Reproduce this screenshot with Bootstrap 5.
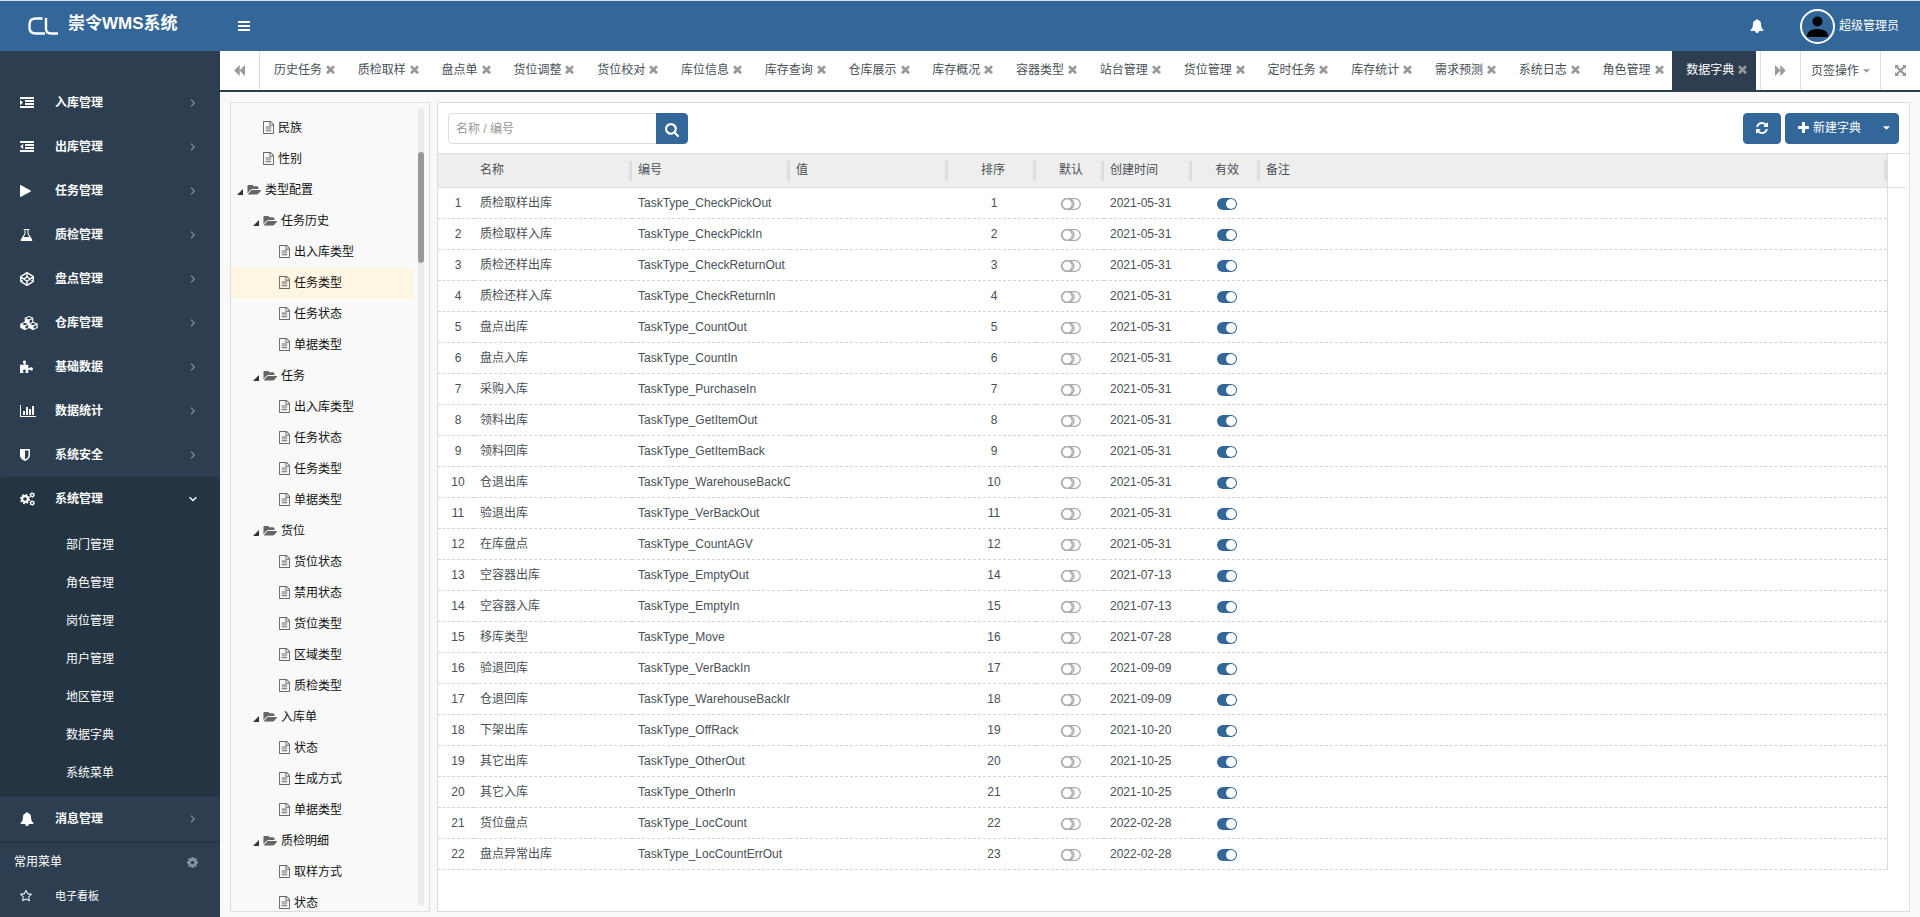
<!DOCTYPE html>
<html lang="zh-CN">
<head>
<meta charset="utf-8">
<meta name="viewport" content="width=device-width, initial-scale=1">
<title>崇令WMS系统</title>
<link href="https://cdn.jsdelivr.net/npm/bootstrap@5.3.0/dist/css/bootstrap.min.css" rel="stylesheet">
<style>
:root{--brand:#336699;--side:#2d3e50;--side-dark:#253442;--line:#ddd}
body{font-family:"Liberation Sans","Noto Sans CJK SC",sans-serif;font-size:12px;line-height:20px;color:#495057;background:#f9f9f9}
a{text-decoration:none;color:inherit}
svg{display:block;fill:currentColor;flex:none}
.topbar{height:51px;background:var(--brand);border-top:1px solid #cfe6f7;color:#fff}
.brandbox{width:220px;padding-left:28px}
.brandlogo{fill:none;stroke:#fff;stroke-width:2.4}
.brandname{font-size:17px;font-weight:700;margin-left:10px;line-height:24px}
.menubtn{margin-left:18px}
.userarea{gap:36px;padding-right:21px}
.plainbtn{background:none;border:0;padding:0;color:inherit}
.avatar{width:35px;height:35px;border:2px solid #fff;border-radius:50%}
.sidebar{width:220px;background:var(--side);color:#fff;padding-top:30px;overflow:hidden}
.sideitem{height:44px;padding:0 23px 0 20px;font-weight:700}
.sideitem .ico{width:35px}
.sideitem .arrow{color:#8a95a0}
.sideitem.open{background:var(--side-dark);border-radius:4px 4px 0 0}
.sideitem.open .arrow{color:#fff}
.submenu{background:var(--side-dark);padding:5px 0}
.submenu a{display:block;height:38px;line-height:38px;padding-left:66px}
.favhead{height:40px;border-top:2px solid var(--side-dark);padding:0 22px 0 14px}
.favhead .plainbtn{color:#8a95a0}
.favitem{height:30px;padding-left:20px;font-size:11px}
.favitem .ico{width:35px}
.tabbar{height:41px;background:#fff;border-bottom:2px solid var(--side);color:#495057}
.tabbtn{width:40px;color:#999;border-left:1px solid var(--line)}
.tabbtn.first{border-left:0;border-right:1px solid var(--line)}
.tabops{width:80px;color:#495057}
.tabops svg{color:#999}
.tabs{padding-right:4px}
.tabitem{width:84px;padding-left:14px;white-space:nowrap;min-width:0;padding-bottom:2px}
.tabitem.short{width:72px}
.tabitem.active{background:var(--side);color:#fff}
.tabitem svg{color:#999;margin-left:4px}
.workarea{padding:10px 10px 5px;gap:7px}
.treebox{width:200px;border:1px solid var(--line);padding-top:10px}
.treebox ul{width:182px}
.treebox a{height:31px;color:#111;padding-bottom:2px}
.treebox a.picked{background:#fff5e3}
.treebox svg{color:#666}
.treebox .tri{color:#333}
.lv1{padding-left:6px}.lv2{padding-left:22px}
.leaf2{padding-left:32px}.leaf3{padding-left:48px}
.track{right:5px;top:5px;bottom:5px;width:6px;border-radius:3px;background:#ebebeb;padding-top:44px}
.thumb{height:111px;border-radius:3px;background:#999}
.gridbox{border:1px solid var(--line);background:#fff}
.toolbar{padding:10px 10px 9px;border-bottom:1px solid var(--line)}
.searchbox{width:240px}
.searchbox .form-control{font-size:12px;height:31px;padding:0 7px;border-color:var(--line);border-radius:4px 0 0 4px;color:#495057}
.searchbox .form-control::placeholder{color:#999}
.btn-brand{--bs-btn-color:#fff;--bs-btn-bg:var(--brand);--bs-btn-border-color:var(--brand);--bs-btn-hover-bg:#2b5782;--bs-btn-hover-color:#fff;font-size:12px;height:31px;padding:0 8px 2px;line-height:20px;border-radius:4px}
.refresh{width:38px}
.create{width:90px}
.more{width:25px}
.datagrid{table-layout:fixed;width:100%;border-collapse:separate;border-spacing:0;border-right:1px solid var(--line)}
.datagrid th{position:relative;height:34px;background:#eee;font-weight:400;border-bottom:1px solid var(--line);padding:0 6px 1px}
.datagrid th.grip::after{content:"";position:absolute;right:0;top:7px;width:3px;height:20px;background:var(--line)}
.datagrid td{height:31px;padding:0 0 1px 6px;border-bottom:1px dashed #d4d4d4;white-space:nowrap;overflow:hidden}
.datagrid .mid{text-align:center;padding-left:2px;padding-right:0}
.datagrid td.rownum,.datagrid td.sortno{padding-left:4px}
.gridside{width:19px;height:34px;border-bottom:1px solid var(--line);margin-right:2px}
.toggle{appearance:none;display:block;width:20px;height:12px;margin:2px auto 0;background:url("data:image/svg+xml,%3Csvg xmlns='http://www.w3.org/2000/svg' viewBox='0 0 20 12' fill='none' stroke='%23aaa' stroke-width='1.3'%3E%3Crect x='.7' y='.7' width='18.6' height='10.6' rx='5.3'/%3E%3Ccircle cx='6' cy='6' r='5.3'/%3E%3Cpath d='M9 .9Q13 3 13 6T9 11.1'/%3E%3C/svg%3E") center/100% 100%}
.toggle:checked{background-image:url("data:image/svg+xml,%3Csvg xmlns='http://www.w3.org/2000/svg' viewBox='0 0 20 12'%3E%3Crect width='20' height='12' rx='6' fill='%23336699'/%3E%3Ccircle cx='14' cy='6' r='5' fill='%23fff'/%3E%3C/svg%3E")}
</style>
</head>
<body>
<svg width="0" height="0" class="position-absolute" aria-hidden="true"><defs>
<symbol id="i-bell" viewBox="0 0 1792 1792"><path d="M912 1696q0-16-16-16-59 0-101.500-42.500t-42.500-101.500q0-16-16-16t-16 16q0 73 51.500 124.500t124.500 51.500q16 0 16-16zm816-288q0 52-38 90t-90 38h-448q0 106-75 181t-181 75-181-75-75-181h-448q-52 0-90-38t-38-90q50-42 91-88t85-119.500 74.500-158.500 50-206 19.500-260q0-152 117-282.500t307-158.500q-8-19-8-39 0-40 28-68t68-28 68 28 28 68q0 20-8 39 190 28 307 158.500t117 282.500q0 139 19.500 260t50 206 74.500 158.500 85 119.500 91 88z"/></symbol>
<symbol id="i-times" viewBox="302 302 1188 1252"><path d="M1490 1322q0 40-28 68l-136 136q-28 28-68 28t-68-28l-294-294-294 294q-28 28-68 28t-68-28l-136-136q-28-28-28-68t28-68l294-294-294-294q-28-28-28-68t28-68l136-136q28-28 68-28t68 28l294 294 294-294q28-28 68-28t68 28l136 136q28 28 28 68t-28 68l-294 294 294 294q28 28 28 68z"/></symbol>
<symbol id="i-folder" viewBox="0 256 1943 1280"><path d="M1943 952q0 31-31 66l-336 396q-43 51-120.500 86.500t-143.500 35.500h-1088q-34 0-60.500-13t-26.500-43q0-31 31-66l336-396q43-51 120.500-86.500t143.500-35.500h1088q34 0 60.500 13t26.500 43zm-343-344v160h-832q-94 0-197 47.500t-164 119.500l-337 396-5 6q0-4-.5-12.500t-.5-12.500v-960q0-92 66-158t158-66h320q92 0 158 66t66 158v32h544q92 0 158 66t66 158z"/></symbol>
<symbol id="i-doc" viewBox="128 0 1536 1792"><path d="M1596 380q28 28 48 76t20 88v1152q0 40-28 68t-68 28h-1344q-40 0-68-28t-28-68v-1600q0-40 28-68t68-28h896q40 0 88 20t76 48zm-444-244v376h376q-10-29-22-41l-313-313q-12-12-41-22zm384 1528v-1024h-416q-40 0-68-28t-28-68v-416h-768v1536h1280zm-1024-864q0-14 9-23t23-9h704q14 0 23 9t9 23v64q0 14-9 23t-23 9h-704q-14 0-23-9t-9-23v-64zm736 224q14 0 23 9t9 23v64q0 14-9 23t-23 9h-704q-14 0-23-9t-9-23v-64q0-14 9-23t23-9h704zm0 256q14 0 23 9t9 23v64q0 14-9 23t-23 9h-704q-14 0-23-9t-9-23v-64q0-14 9-23t23-9h704z"/></symbol>
<symbol id="i-cog" viewBox="128 128 1536 1536"><path d="M1152 896q0-106-75-181t-181-75-181 75-75 181 75 181 181 75 181-75 75-181zm512-109v222q0 12-8 23t-20 13l-185 28q-19 54-39 91 35 50 107 138 10 12 10 25t-9 23q-27 37-99 108t-94 71q-12 0-26-9l-138-108q-44 23-91 38-16 136-29 186-7 28-36 28h-222q-14 0-24.500-8.500t-11.500-21.500l-28-184q-49-16-90-37l-141 107q-10 9-25 9-14 0-25-11-126-114-165-168-7-10-7-23 0-12 8-23 15-21 51-66.500t54-70.500q-27-50-41-99l-183-27q-13-2-21-12.500t-8-23.500v-222q0-12 8-23t19-13l186-28q14-46 39-92-40-57-107-138-10-12-10-24 0-10 9-23 26-36 98.500-107.500t94.500-71.500q13 0 26 10l138 107q44-23 91-38 16-136 29-186 7-28 36-28h222q14 0 24.500 8.500t11.500 21.500l28 184q49 16 90 37l142-107q9-9 24-9 13 0 25 10 129 119 165 170 7 8 7 22 0 12-8 23-15 21-51 66.500t-54 70.500q26 50 41 98l183 28q13 2 21 12.500t8 23.500z"/></symbol>
<symbol id="i-search" viewBox="64 128 1664 1664"><path d="M1216 832q0-185-131.500-316.500t-316.500-131.500-316.500 131.500-131.500 316.500 131.500 316.500 316.500 131.500 316.500-131.500 131.500-316.500zm512 832q0 52-38 90t-90 38q-54 0-90-38l-343-342q-179 124-399 124-143 0-273.500-55.500t-225-150-150-225-55.500-273.500 55.500-273.500 150-225 225-150 273.500-55.500 273.500 55.500 225 150 150 225 55.500 273.500q0 220-124 399l343 343q37 37 37 90z"/></symbol>
<symbol id="i-refresh" viewBox="128 128 1536 1536"><path d="M1639 1056q0 5-1 7-64 268-268 434.500t-478 166.500q-146 0-282.500-55t-243.500-157l-129 129q-19 19-45 19t-45-19-19-45v-448q0-26 19-45t45-19h448q26 0 45 19t19 45-19 45l-137 137q71 66 161 102t187 36q134 0 250-65t186-179q11-17 53-117 8-23 30-23h192q13 0 22.500 9.500t9.500 22.500zm25-800v448q0 26-19 45t-45 19h-448q-26 0-45-19t-19-45 19-45l138-138q-148-137-349-137-134 0-250 65t-186 179q-11 17-53 117-8 23-30 23h-199q-13 0-22.500-9.500t-9.500-22.500v-7q65-268 270-434.500t480-166.500q146 0 284 55.500t245 156.500l130-129q19-19 45-19t45 19 19 45z"/></symbol>
<symbol id="i-plus" viewBox="192 128 1408 1408"><path d="M1600 736v192q0 40-28 68t-68 28h-416v416q0 40-28 68t-68 28h-192q-40 0-68-28t-28-68v-416h-416q-40 0-68-28t-28-68v-192q0-40 28-68t68-28h416v-416q0-40 28-68t68-28h192q40 0 68 28t28 68v416h416q40 0 68 28t28 68z"/></symbol>
<symbol id="i-back" viewBox="128 128 1600 1536"><path d="M1683 141q19-19 32-13t13 32v1472q0 26-13 32t-32-13l-710-710q-8-9-13-19v710q0 26-13 32t-32-13l-710-710q-19-19-19-45t19-45l710-710q19-19 32-13t13 32v710q5-11 13-19z"/></symbol>
<symbol id="i-forward" viewBox="128 128 1600 1536"><path transform="translate(1856 0) scale(-1 1)" d="M1683 141q19-19 32-13t13 32v1472q0 26-13 32t-32-13l-710-710q-8-9-13-19v710q0 26-13 32t-32-13l-710-710q-19-19-19-45t19-45l710-710q19-19 32-13t13 32v710q5-11 13-19z"/></symbol>
<symbol id="i-star" viewBox="64 64 1664 1664"><path d="M1201 1004l306-297-422-62-189-382-189 382-422 62 306 297-73 421 378-199 377 199zm527-357q0 22-26 48l-363 354 86 500q1 7 1 20 0 50-41 50-19 0-40-12l-449-236-449 236q-22 12-40 12-21 0-31.500-14.500t-10.500-35.500q0-6 2-20l86-500-364-354q-25-27-25-48 0-37 56-46l502-73 225-455q19-41 49-41t49 41l225 455 502 73q56 9 56 46z"/></symbol>
<symbol id="i-shield" viewBox="256 0 1280 1792"><path d="M1344 960v-640h-448v1137q119-63 213-137 235-184 235-360zm192-768v768q0 86-33.500 170.500t-83 150-118 127.500-126.500 103-121 77.500-89.500 49.500-42.500 20q-12 6-26 6t-26-6q-16-7-42.500-20t-89.500-49.500-121-77.500-126.500-103-118-127.500-83-150-33.500-170.500v-768q0-26 19-45t45-19h1152q26 0 45 19t19 45z"/></symbol>
<symbol id="i-chart" viewBox="0 0 2048 1792"><path d="M640 896v512h-256v-512h256zm384-512v1024h-256v-1024h256zm1024 1152v128h-2048v-1536h128v1408h1920zm-640-896v768h-256v-768h256zm384-384v1152h-256v-1152h256z"/></symbol>
<symbol id="i-indent" viewBox="0 0 14 14"><path d="M0 1h14v2H0zM5 4h9v2H5zM5 7h9v2H5zM0 10h14v2H0zM0 3.800L3 6.500 0 9.200z"/></symbol>
<symbol id="i-outdent" viewBox="0 0 14 14"><path d="M0 1h14v2H0zM5 4h9v2H5zM5 7h9v2H5zM0 10h14v2H0zM3.200 3.800L.2 6.500l3 2.700z"/></symbol>
<symbol id="i-play" viewBox="0 0 11 14"><path d="M0 1.400q0-.7.6-.4l10.100 5.600q.5.400 0 .8L.6 13q-.6.300-.6-.4z"/></symbol>
<symbol id="i-flask" viewBox="0 0 13 14"><path fill-rule="evenodd" d="M4 1h5q.5 0 .5.500T9 2h-.5v3.500l3.700 6q.8 1.500-1 1.500H1.800q-1.800 0-1-1.500l3.700-6V2H4q-.5 0-.5-.5T4 1zm1.500 1v3.800L3.600 9h5.800L7.500 5.800V2z"/></symbol>
<symbol id="i-codepen" viewBox="0 0 14 14"><path fill="none" stroke="currentColor" stroke-width="1.400" stroke-linejoin="round" d="M7 .7l6.300 4v4.600L7 13.300.7 9.300V4.700zM7 1v3.600M7 9.400V13M.7 4.700L7 9.200l6.300-4.500M.7 9.300L7 4.800l6.300 4.500"/></symbol>
<symbol id="i-cubes" viewBox="0 0 18 14"><path fill-rule="evenodd" d="M9 0l3.800 1.600q.5.200.5.700v3.500l4 1.700q.5.200.5.700v3.100q0 .5-.5.700L13.500 14h-.8L9 12.100 5.300 14h-.8L.7 12q-.5-.2-.5-.7V8.200q0-.5.500-.7l4-1.700V2.300q0-.5.500-.7zM9 1.100L6.100 2.300 9 3.500l2.900-1.200zM9.500 4.400v2.900l2.700-1.200V3.300zM4.900 6.700L2 8l2.900 1.200L7.800 8zM13.100 6.700L10.200 8l2.900 1.200L16 8zM5.400 10.200v2.600L8.300 11.400V9zM13.600 10.200v2.600l3-1.500V9z"/></symbol>
<symbol id="i-puzzle" viewBox="0 0 13 14"><path d="M0 4.700h3.600q.5-.3.200-.9Q2.800 2.800 2.900 1.800 3.200.4 4.500.4T6.100 1.700q.1 1-.6 1.900-.4.800.2 1.100H8.300v3.200q.4.700 1 .2 1-.9 2-.8 1.700.1 1.700 1.600t-1.800 1.600q-1 0-1.700-.7-.8-.5-1.200.3V13H5.500q-.5-.3-.1-1 .6-.7.4-1.600-.3-1-1.400-1T3 10.400q-.2.900.4 1.600.4.700-.2 1H0z"/></symbol>
<symbol id="i-cogs" viewBox="0 0 15 14"><circle cx="5" cy="7" r="2.900" fill="none" stroke="currentColor" stroke-width="2.200"/><circle cx="5" cy="7" r="4.500" fill="none" stroke="currentColor" stroke-width="1.300" stroke-dasharray="1.800 1.734"/><circle cx="12.200" cy="3" r="1.600" fill="none" stroke="currentColor" stroke-width="1.400"/><circle cx="12.200" cy="3" r="2.500" fill="none" stroke="currentColor" stroke-width=".7" stroke-dasharray="1.300 1.318"/><circle cx="12.200" cy="11" r="1.600" fill="none" stroke="currentColor" stroke-width="1.400"/><circle cx="12.200" cy="11" r="2.500" fill="none" stroke="currentColor" stroke-width=".7" stroke-dasharray="1.300 1.318"/></symbol>
<symbol id="i-expand" viewBox="0 0 11 11"><path d="M0 0h4L2.800 1.200 5.500 3.900l2.700-2.700L7 0h4v4L9.800 2.800 7.100 5.500l2.700 2.700L11 7v4H7l1.200-1.200-2.700-2.700-2.700 2.700L4 11H0V7l1.200 1.200 2.700-2.700-2.700-2.700L0 4z"/></symbol>
<symbol id="i-caret" viewBox="0 0 8 4"><path d="M0 0h8L4 4z"/></symbol>
<symbol id="i-right" viewBox="0 0 8 8"><path fill="none" stroke="currentColor" stroke-width="1.100" d="M2 .6L5.300 4 2 7.400"/></symbol>
<symbol id="i-down" viewBox="0 0 8 8"><path fill="none" stroke="currentColor" stroke-width="1.400" d="M.6 2.200L4 5.500 7.400 2.200"/></symbol>
<symbol id="i-tri" viewBox="0 0 6 6"><path d="M6 0v6H0z"/></symbol>
</defs></svg>

<div class="vh-100 d-flex flex-column overflow-hidden">
  <header class="topbar d-flex align-items-center flex-shrink-0">
    <a href="#" class="brandbox d-flex align-items-center pb-1">
      <svg class="brandlogo mt-1" width="30" height="18" viewBox="0 0 30 18" aria-hidden="true"><path d="M14.500 1.500H8Q1.500 1.500 1.500 7.500v3Q1.500 16.500 8 16.500h9M18 1v10.500q0 5 5 5H30"/></svg>
      <span class="brandname">崇令WMS系统</span>
    </a>
    <button class="plainbtn menubtn" type="button" aria-label="菜单"><svg width="12" height="11" viewBox="0 0 12 11"><path d="M0 0h12v2H0zM0 4h12v2H0zM0 8h12v2H0z"/></svg></button>
    <div class="ms-auto d-flex align-items-center userarea">
      <button class="plainbtn" type="button" aria-label="消息"><svg width="14" height="14"><use href="#i-bell"/></svg></button>
      <a href="#" class="d-flex align-items-center gap-1">
        <svg class="avatar" viewBox="0 0 31 31" aria-hidden="true"><g fill="#000"><circle cx="15.500" cy="10.500" r="5"/><path d="M5 26v-2q1-6 10.500-6T26 24v2z"/></g></svg>
        <span>超级管理员</span>
      </a>
    </div>
  </header>
  <div class="d-flex flex-grow-1 overflow-hidden">
    <nav class="sidebar flex-shrink-0" id="sidebar" aria-label="主菜单"></nav>
    <div class="d-flex flex-column flex-grow-1 overflow-hidden">
      <div class="tabbar d-flex flex-shrink-0">
        <button class="plainbtn tabbtn first d-flex align-items-center justify-content-center flex-shrink-0" type="button" aria-label="向左"><svg width="11" height="11"><use href="#i-back"/></svg></button>
        <nav class="tabs d-flex flex-grow-1 overflow-hidden" id="tabs" aria-label="页签"></nav>
        <button class="plainbtn tabbtn d-flex align-items-center justify-content-center flex-shrink-0" type="button" aria-label="向右"><svg width="11" height="11"><use href="#i-forward"/></svg></button>
        <button class="plainbtn tabbtn tabops d-flex align-items-center justify-content-center flex-shrink-0" type="button">页签操作<svg class="ms-1" width="7" height="4"><use href="#i-caret"/></svg></button>
        <button class="plainbtn tabbtn d-flex align-items-center justify-content-center flex-shrink-0" type="button" aria-label="全屏"><svg width="11" height="11"><use href="#i-expand"/></svg></button>
      </div>
      <main class="workarea d-flex flex-grow-1 overflow-hidden">
        <aside class="treebox position-relative flex-shrink-0 overflow-hidden">
          <ul class="list-unstyled mb-0" id="tree"></ul>
          <div class="track position-absolute"><div class="thumb"></div></div>
        </aside>
        <section class="gridbox flex-grow-1 overflow-hidden">
          <form class="toolbar d-flex" onsubmit="return false">
            <div class="input-group flex-nowrap searchbox">
              <input class="form-control" type="text" placeholder="名称 / 编号" aria-label="名称 / 编号">
              <button class="btn btn-brand d-flex align-items-center" type="submit" aria-label="搜索"><svg width="14" height="14" class="mt-1"><use href="#i-search"/></svg></button>
            </div>
            <div class="ms-auto d-flex gap-1">
              <button class="btn btn-brand d-flex align-items-center justify-content-center refresh" type="button" aria-label="刷新"><svg width="12" height="12"><use href="#i-refresh"/></svg></button>
              <div class="btn-group">
                <button class="btn btn-brand d-flex align-items-center create" type="button"><svg width="11" height="11" class="mx-1"><use href="#i-plus"/></svg>新建字典</button>
                <button class="btn btn-brand d-flex align-items-center justify-content-center more" type="button" aria-label="更多"><svg width="7" height="4"><use href="#i-caret"/></svg></button>
              </div>
            </div>
          </form>
          <div class="d-flex">
            <div class="flex-grow-1">
              <table class="datagrid">
                <colgroup><col width="36"><col width="158"><col width="158"><col width="158"><col width="88"><col width="68"><col width="88"><col width="68"><col></colgroup>
                <thead><tr><th></th><th class="grip">名称</th><th class="grip">编号</th><th class="grip">值</th><th class="grip mid">排序</th><th class="grip mid">默认</th><th class="grip">创建时间</th><th class="grip mid">有效</th><th class="grip">备注</th></tr></thead>
                <tbody id="rows"></tbody>
              </table>
            </div>
            <div class="gridside flex-shrink-0"></div>
          </div>
        </section>
      </main>
    </div>
  </div>
</div>
<script>
const icon=(n,w,h,c='')=>`<svg class="${c}" width="${w}" height="${h}" aria-hidden="true"><use href="#i-${n}"/></svg>`;

const menu=[['入库管理','indent',14],['出库管理','outdent',14],['任务管理','play',11],['质检管理','flask',13],['盘点管理','codepen',14],['仓库管理','cubes',18],['基础数据','puzzle',13],['数据统计','chart',16],['系统安全','shield',10],['系统管理','cogs',15,['部门管理','角色管理','岗位管理','用户管理','地区管理','数据字典','系统菜单']],['消息管理','bell',14]];
document.getElementById('sidebar').innerHTML=menu.map(([t,i,w,sub])=>
  `<a href="#" class="sideitem d-flex align-items-center${sub?' open':''}"><span class="ico">${icon(i,w,14)}</span><span>${t}</span>${icon(sub?'down':'right',8,8,'arrow ms-auto')}</a>`+
  (sub?`<div class="submenu">${sub.map(s=>`<a href="#">${s}</a>`).join('')}</div>`:'')).join('')+
  `<div class="favhead d-flex align-items-center justify-content-between">常用菜单<button class="plainbtn" type="button" aria-label="设置">${icon('cog',11,11)}</button></div>
   <a href="#" class="favitem d-flex align-items-center"><span class="ico">${icon('star',12,12)}</span>电子看板</a>`;

const tabs='历史任务 质检取样 盘点单 货位调整 货位校对 库位信息 库存查询 仓库展示 库存概况 容器类型 站台管理 货位管理 定时任务 库存统计 需求预测 系统日志 角色管理 数据字典'.split(' ');
document.getElementById('tabs').innerHTML=tabs.map(t=>
  `<a href="#" class="tabitem d-flex align-items-center${t.length<4?' short':''}${t==='数据字典'?' active':''}">${t}${icon('times',9,9)}</a>`).join('');

const tree=[['民族','leaf2'],['性别','leaf2'],['类型配置','lv1'],
 ['任务历史','lv2'],['出入库类型'],['任务类型','leaf3 picked'],['任务状态'],['单据类型'],
 ['任务','lv2'],['出入库类型'],['任务状态'],['任务类型'],['单据类型'],
 ['货位','lv2'],['货位状态'],['禁用状态'],['货位类型'],['区域类型'],['质检类型'],
 ['入库单','lv2'],['状态'],['生成方式'],['单据类型'],
 ['质检明细','lv2'],['取样方式'],['状态']];
document.getElementById('tree').innerHTML=tree.map(([t,c='leaf3'])=>
  `<li><a href="#" class="d-flex align-items-center gap-1 ${c}">${c.startsWith('lv')?icon('tri',6,6,'tri mt-1')+icon('folder',14,10):icon('doc',11,13)}<span>${t}</span></a></li>`).join('');

const rows=`质检取样出库 CheckPickOut 1 2021-05-31
质检取样入库 CheckPickIn 2 2021-05-31
质检还样出库 CheckReturnOut 3 2021-05-31
质检还样入库 CheckReturnIn 4 2021-05-31
盘点出库 CountOut 5 2021-05-31
盘点入库 CountIn 6 2021-05-31
采购入库 PurchaseIn 7 2021-05-31
领料出库 GetItemOut 8 2021-05-31
领料回库 GetItemBack 9 2021-05-31
仓退出库 WarehouseBackOut 10 2021-05-31
验退出库 VerBackOut 11 2021-05-31
在库盘点 CountAGV 12 2021-05-31
空容器出库 EmptyOut 14 2021-07-13
空容器入库 EmptyIn 15 2021-07-13
移库类型 Move 16 2021-07-28
验退回库 VerBackIn 17 2021-09-09
仓退回库 WarehouseBackIn 18 2021-09-09
下架出库 OffRack 19 2021-10-20
其它出库 OtherOut 20 2021-10-25
其它入库 OtherIn 21 2021-10-25
货位盘点 LocCount 22 2022-02-28
盘点异常出库 LocCountErrOut 23 2022-02-28`.split('\n').map(r=>r.split(' '));
document.getElementById('rows').innerHTML=rows.map(([n,c,o,d],i)=>
  `<tr><td class="mid rownum">${i+1}</td><td>${n}</td><td>TaskType_${c}</td><td></td><td class="mid sortno">${o}</td><td class="mid"><input class="toggle" type="checkbox" aria-label="${n} 默认"></td><td>${d}</td><td class="mid"><input class="toggle" type="checkbox" checked aria-label="${n} 有效"></td><td></td></tr>`).join('');
</script>
</body>
</html>
